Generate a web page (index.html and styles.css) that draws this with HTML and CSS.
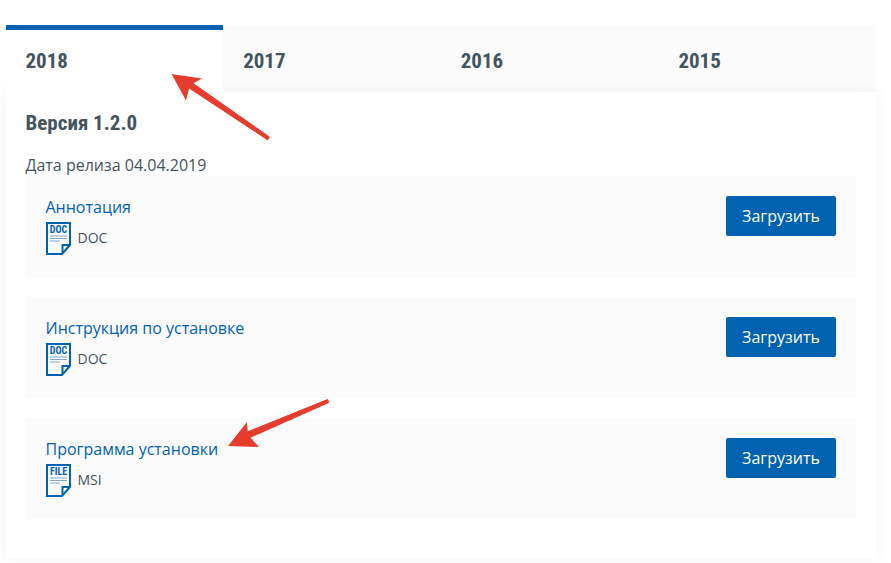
FILE: index.html
```html
<!DOCTYPE html>
<html lang="ru">
<head>
<meta charset="utf-8">
<title>Версия 1.2.0</title>
<link rel="stylesheet" href="styles.css">
</head>
<body>
<main class="panel">
  <nav class="tabs">
    <a class="tab tab-active">2018</a>
    <a class="tab">2017</a>
    <a class="tab">2016</a>
    <a class="tab">2015</a>
  </nav>
  <section class="card">
    <h2 class="version">Версия 1.2.0</h2>
    <p class="date">Дата релиза 04.04.2019</p>
    <ul class="files">
      <li class="file">
        <div class="file-info">
          <a class="file-name">Аннотация</a>
          <div class="file-type">
            <svg class="doc-icon" viewBox="0 0 25 33" width="25" height="33"><path class="doc-outline" d="M1 1H24V23L16 32H1Z"/><path class="doc-outline" d="M23.5 23H16.5V31"/><path class="doc-lines" d="M4 14H21M4 16.5H21M4 19H14"/><text class="doc-label" x="12.5" y="11">DOC</text></svg>
            <span>DOC</span>
          </div>
        </div>
        <button class="download">Загрузить</button>
      </li>
      <li class="file">
        <div class="file-info">
          <a class="file-name">Инструкция по установке</a>
          <div class="file-type">
            <svg class="doc-icon" viewBox="0 0 25 33" width="25" height="33"><path class="doc-outline" d="M1 1H24V23L16 32H1Z"/><path class="doc-outline" d="M23.5 23H16.5V31"/><path class="doc-lines" d="M4 14H21M4 16.5H21M4 19H14"/><text class="doc-label" x="12.5" y="11">DOC</text></svg>
            <span>DOC</span>
          </div>
        </div>
        <button class="download">Загрузить</button>
      </li>
      <li class="file">
        <div class="file-info">
          <a class="file-name">Программа установки</a>
          <div class="file-type">
            <svg class="doc-icon" viewBox="0 0 25 33" width="25" height="33"><path class="doc-outline" d="M1 1H24V23L16 32H1Z"/><path class="doc-outline" d="M23.5 23H16.5V31"/><path class="doc-lines" d="M4 14H21M4 16.5H21M4 19H14"/><text class="doc-label" x="12.5" y="11">FILE</text></svg>
            <span>MSI</span>
          </div>
        </div>
        <button class="download">Загрузить</button>
      </li>
    </ul>
  </section>
</main>
<svg class="arrows" width="891" height="563" viewBox="0 0 891 563" aria-hidden="true">
  <path class="arrow-shaft" d="M188.300 87.500L191.700 82.500L269.400 137L267.600 139.800Z"/>
  <path class="arrow-head" d="M171.500 74L202 78.500L190 85L186 100.500Z"/>
  <path class="arrow-shaft" d="M249.200 437.800L246.800 432.200L327.500 399.500L328.700 402.500Z"/>
  <path class="arrow-head" d="M228 446L247 422L248 435L259 447Z"/>
</svg>
</body>
</html>
```
FILE: styles.css
```css
* { box-sizing: border-box; }
html, body { margin: 0; background: #fff; }
body {
  width: 891px;
  height: 563px;
  overflow: hidden;
  padding: 25px 15px 0 5.5px;
  font-family: "Open Sans", sans-serif;
  color: #44545f;
  position: relative;
}
.panel { width: 870.5px; }
.tabs { display: grid; grid-template-columns: repeat(4, 1fr); height: 67px; background: #fbfbfb; }
.tab {
  padding: 22px 0 0 20px;
  font-family: Roboto, sans-serif;
  font-stretch: 75%;
  font-weight: 700;
  font-size: 21px;
  line-height: 28px;
  color: #44545f;
}
.tab-active { background: #fff; border-top: 5px solid #0062b1; padding-top: 17px; }
.card {
  height: 467px;
  padding: 18px 20px 0;
  background: #fff;
  box-shadow: 0 0 16px rgba(0, 0, 0, 0.05);
}
.version {
  margin: 0;
  font-family: Roboto, sans-serif;
  font-stretch: 75%;
  font-weight: 700;
  font-size: 21px;
  line-height: 26px;
  color: #44545f;
}
.date { margin: 18px 0 0; font-size: 16px; line-height: 22px; }
.files { list-style: none; margin: 0; padding: 0; display: flex; flex-direction: column; gap: 20.5px; }
.file {
  height: 100.5px;
  padding: 20px 20px 0 20px;
  background: #fbfbfb;
  display: flex;
  justify-content: space-between;
  align-items: flex-start;
}
.file-name { display: block; font-size: 16px; line-height: 22px; color: #0062b1; }
.file-type { display: flex; align-items: center; gap: 7px; margin-top: 4px; font-size: 14px; line-height: 20px; }
.file-type span { position: relative; top: -1px; }
.doc-icon { display: block; flex: none; }
.doc-outline { fill: none; stroke: #0062b1; stroke-width: 2; }
.doc-lines { fill: none; stroke: #7fa9cf; stroke-width: 1; }
.doc-label {
  font-family: Roboto, sans-serif;
  font-stretch: 75%;
  font-weight: 700;
  font-size: 10px;
  fill: #0062b1;
  text-anchor: middle;
}
.download {
  width: 110px;
  height: 40px;
  border: 0;
  border-radius: 2px;
  background: #0062b1;
  color: #fff;
  font-family: "Open Sans", sans-serif;
  font-size: 16px;
  padding: 0;
}
.arrows { position: absolute; left: 0; top: 0; pointer-events: none; }
.arrow-shaft { fill: #e53c2e; stroke: #e53c2e; stroke-width: 1; stroke-linejoin: round; }
.arrow-head { fill: #e53c2e; }
```
